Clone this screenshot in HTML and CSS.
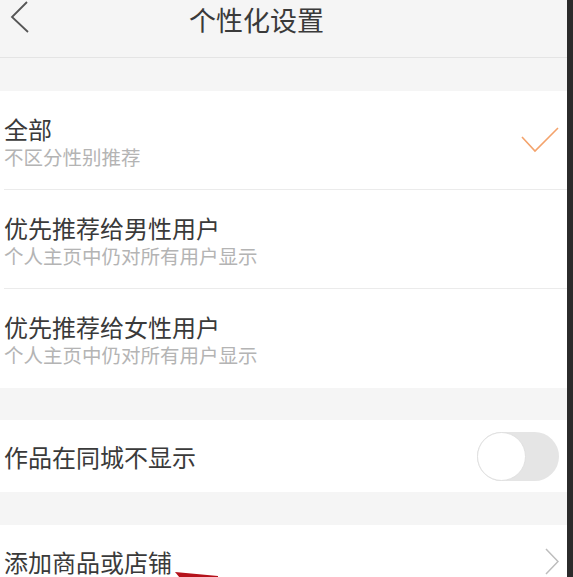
FILE: index.html
```html
<!DOCTYPE html>
<html lang="zh-CN">
<head>
<meta charset="utf-8">
<title>个性化设置</title>
<link rel="stylesheet" href="styles.css">
</head>
<body>
<div class="page">
  <div class="screen">
    <header class="header">
      <svg class="back" viewBox="0 0 20 34" width="20" height="34"><polyline points="17,2 2,17 18,32" fill="none" stroke="#555" stroke-width="1.8"/></svg>
      <h1 class="title">个性化设置</h1>
    </header>

    <section class="group first">
      <div class="row double">
        <div class="texts">
          <div class="main">全部</div>
          <div class="sub">不区分性别推荐</div>
        </div>
        <svg class="check" viewBox="0 0 38 26" width="38" height="26"><polyline points="1,10 14,24 37,1" fill="none" stroke="#f4a36c" stroke-width="1.6"/></svg>
      </div>
      <div class="row double">
        <div class="texts">
          <div class="main">优先推荐给男性用户</div>
          <div class="sub">个人主页中仍对所有用户显示</div>
        </div>
      </div>
      <div class="row double last">
        <div class="texts">
          <div class="main">优先推荐给女性用户</div>
          <div class="sub">个人主页中仍对所有用户显示</div>
        </div>
      </div>
    </section>

    <section class="group">
      <div class="row single last">
        <div class="main">作品在同城不显示</div>
        <div class="toggle"><span class="knob"></span></div>
      </div>
    </section>

    <section class="group gap33">
      <div class="row single last">
        <div class="main">添加商品或店铺</div>
        <svg class="arrow" viewBox="0 0 14 27" width="14" height="27"><polyline points="1,1 13,13.5 1,26" fill="none" stroke="#bdbdbd" stroke-width="1.5"/></svg>
      </div>
    </section>

    <svg class="annot" viewBox="0 0 50 8" width="50" height="8"><polygon points="1,2 44,6 44,8 6,8" fill="#b5121b"/></svg>
  </div>
  <div class="edge"></div>
</div>
</body>
</html>
```

FILE: styles.css
```css
html, body {
  margin: 0;
  padding: 0;
}
body {
  width: 573px;
  height: 577px;
  overflow: hidden;
  background: #f5f5f5;
  font-family: "Noto Sans CJK SC", "Noto Sans", sans-serif;
}
.page {
  display: flex;
  height: 577px;
}
.screen {
  position: relative;
  flex: 1;
  background: #f5f5f5;
  overflow: hidden;
}
.edge {
  width: 6px;
  background: #2b2b2b;
}
.header {
  display: flex;
  align-items: flex-start;
  height: 57px;
  padding-left: 10px;
  border-bottom: 1px solid #e4e4e4;
  background: #f5f5f5;
}
.back {
  display: block;
}
.title {
  margin: 0 0 0 159px;
  font-size: 27px;
  font-weight: 400;
  line-height: 40px;
  color: #3a3a3a;
}
.group {
  background: #fff;
  margin-top: 32px;
}
.group.first,
.group.gap33 {
  margin-top: 33px;
}
.row {
  display: flex;
  align-items: center;
  justify-content: space-between;
  box-sizing: border-box;
  margin-left: 4px;
  padding-right: 8px;
  border-bottom: 1px solid #ebebeb;
}
.row.last {
  border-bottom: none;
}
.row.double {
  height: 99px;
}
.row.single {
  height: 72px;
}
.texts {
  display: flex;
  flex-direction: column;
  padding-top: 4px;
}
.main {
  font-size: 24px;
  line-height: 29px;
  color: #3a3a3a;
}
.sub {
  font-size: 19.5px;
  line-height: 28px;
  color: #b4b4b4;
}
.check {
  display: block;
}
.toggle {
  position: relative;
  width: 82px;
  height: 49px;
  border-radius: 25px;
  background: #e5e5e5;
}
.knob {
  position: absolute;
  left: 0;
  top: 0;
  width: 47px;
  height: 47px;
  border-radius: 50%;
  background: #fff;
  border: 1px solid #e0e0e0;
}
.arrow {
  display: block;
}
.annot {
  position: absolute;
  left: 174px;
  top: 570px;
}
```
